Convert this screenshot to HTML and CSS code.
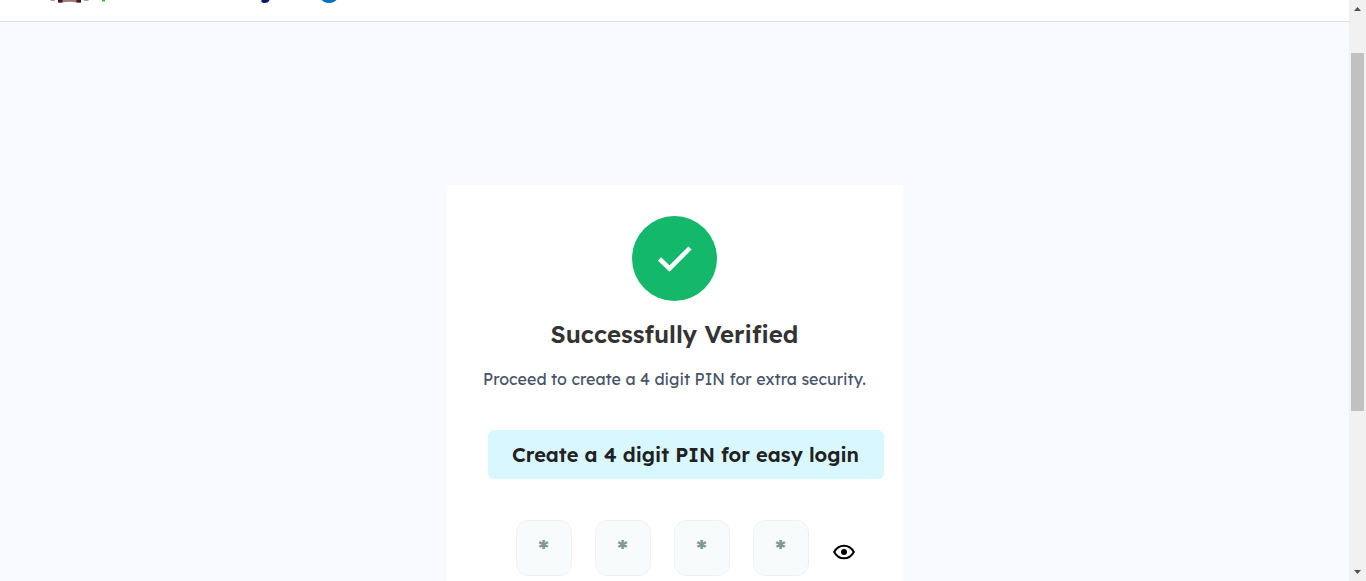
FILE: index.html
```html
<!DOCTYPE html>
<html lang="en">
<head>
<meta charset="utf-8">
<meta name="viewport" content="width=device-width, initial-scale=1">
<title>Create PIN</title>
<link rel="stylesheet" href="styles.css">
</head>
<body>
<div class="page">
  <header class="header">
    <svg class="logo" width="310" height="4" viewBox="0 0 310 4" aria-hidden="true">
      <path d="M2 0h5v1H3zM36 0h5l-1 1h-4z" fill="#a5a2a2"/>
      <path d="M10 0h23v2.500h-3.500Q21.500 .8 13.500 2.500H10z" fill="#9b7b79"/>
      <path d="M10 0h4.500v2.500H10zM28.500 0H33v2.500h-4.500z" fill="#4b1717"/>
      <path d="M54 0h3v1.500h-3z" fill="#3dbb3d"/>
      <path d="M213.500 0h8q-1 3-5 3t-3-3z" fill="#001c64"/>
      <path d="M273.500 0h15q-3 3-7.500 3t-7.500-3z" fill="#0070c0"/>
    </svg>
  </header>
  <main class="main">
    <form class="card">
      <svg class="success" width="85" height="85" viewBox="0 0 85 85" aria-hidden="true">
        <circle cx="42.500" cy="42.500" r="42.500" fill="#14b86a"/>
        <path d="M27.500 43 37.500 52.500 58 32" fill="none" stroke="#fff" stroke-width="4.500"/>
      </svg>
      <h1 class="title">Successfully Verified</h1>
      <p class="subtitle">Proceed to create a 4 digit PIN for extra security.</p>
      <h2 class="banner">Create a 4 digit PIN for easy login</h2>
      <div class="pin">
        <input class="digit" type="text" maxlength="1" placeholder="*" aria-label="PIN digit 1">
        <input class="digit" type="text" maxlength="1" placeholder="*" aria-label="PIN digit 2">
        <input class="digit" type="text" maxlength="1" placeholder="*" aria-label="PIN digit 3">
        <input class="digit" type="text" maxlength="1" placeholder="*" aria-label="PIN digit 4">
        <button class="reveal" type="button" aria-label="Show PIN">
          <svg width="24" height="24" viewBox="0 0 24 24" aria-hidden="true">
            <path d="M2.200 12Q5.500 5.700 12 5.700T21.800 12Q18.500 18.300 12 18.300T2.200 12z" fill="none" stroke="#000" stroke-width="2"/>
            <circle cx="12" cy="12" r="3" fill="#000"/>
          </svg>
        </button>
      </div>
    </form>
  </main>
</div>
<div class="scrollbar" aria-hidden="true">
  <svg width="17" height="17" viewBox="0 0 17 17"><path d="M5 11h7L8.500 7z" fill="#505050"/></svg>
  <div class="track"><div class="thumb"></div></div>
  <svg width="17" height="17" viewBox="0 0 17 17"><path d="M5 6h7l-3.500 4z" fill="#505050"/></svg>
</div>
</body>
</html>
```

FILE: styles.css
```css
* { box-sizing: border-box; }

body {
  margin: 0;
  height: 100vh;
  display: flex;
  overflow: hidden;
  font-family: Lexend, Inter, sans-serif;
  background: #f9faff;
}

.page {
  flex: 1;
  min-width: 0;
  overflow: hidden;
}

.header {
  height: 22px;
  padding-left: 48px;
  background: #fff;
  border-bottom: 1px solid #dcdfe5;
}

.logo { display: block; }

.main {
  display: flex;
  justify-content: center;
  padding: 163px 16px 64px;
}

.card {
  width: 100%;
  max-width: 456px;
  padding: 31px 19px 64px;
  background: #fff;
  text-align: center;
}

.success {
  display: block;
  margin: 0 auto;
}

.title {
  margin: 17px 0;
  font-size: 24px;
  line-height: 32px;
  font-weight: 600;
  color: #333;
}

.subtitle {
  margin: 0;
  font-size: 16px;
  line-height: 24px;
  font-weight: 400;
  color: #475467;
}

.banner {
  margin: 39px 0 0 22px;
  padding: 12px;
  border-radius: 6px;
  background: #d9f7ff;
  font-size: 20px;
  line-height: 25px;
  font-weight: 600;
  color: #212121;
}

.pin {
  display: flex;
  align-items: center;
  justify-content: center;
  gap: 23px;
  margin: 41px 0 0 22px;
}

.digit {
  width: 56px;
  height: 56px;
  padding: 0;
  border: 1px solid #f0f2f2;
  border-radius: 12px;
  background: #f7fbfc;
  font: 700 24px/30px Lexend, Inter, sans-serif;
  text-align: center;
  color: #212121;
}

.digit::placeholder {
  color: #7f9898;
  opacity: 1;
}

.reveal {
  display: flex;
  margin-top: 8px;
  padding: 0;
  border: 0;
  background: none;
  cursor: pointer;
}

.scrollbar {
  width: 17px;
  display: flex;
  flex-direction: column;
  background: #f1f1f1;
}

.track {
  flex: 1;
  padding: 36px 2px 0;
}

.thumb {
  height: 70%;
  background: #c1c1c1;
}
```
